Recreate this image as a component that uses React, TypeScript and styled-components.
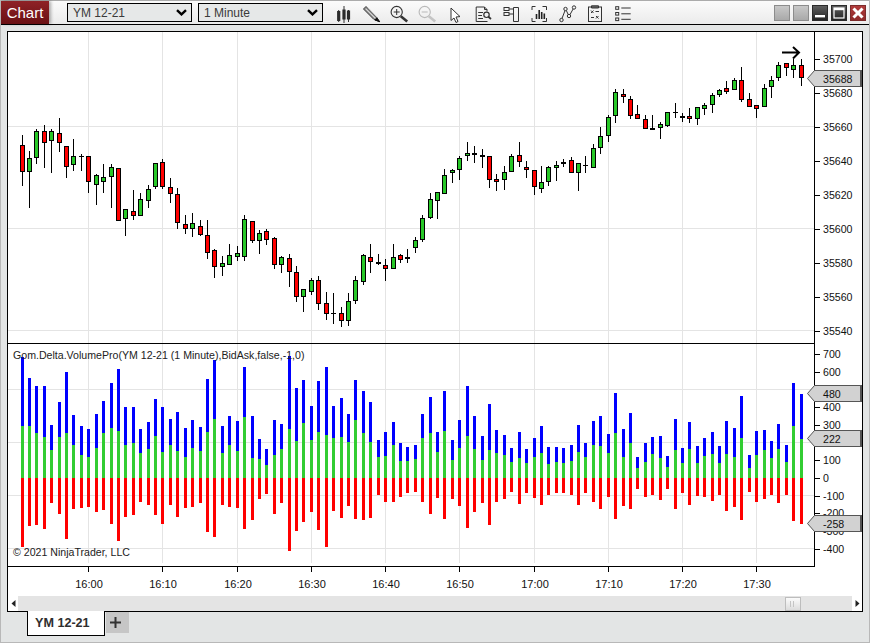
import React from "react";
import styled, { createGlobalStyle } from "styled-components";

const FONT = `"Liberation Sans", Arial, sans-serif`;

const GlobalStyle = createGlobalStyle`
  html, body { margin: 0; padding: 0; background: #e3e5e5; overflow: hidden; }
  * { box-sizing: border-box; }
`;

/* ---------- data: [wick x, high, body top, body bottom, low], page coordinates from thirds-of-a-pixel readings ---------- */
type Kind = "R" | "G" | "D";
type Raw = [number, Kind, number, number, number, number];

const seg1: Raw[] = [
  [67,"R",75,105,187,228],[88,"G",123,145,187,293],[109,"G",57,63,145,161],[133,"R",45,64,100,173],[154,"G",57,64,94,188],
  [178,"R",24,70,100,126],[199,"R",108,109,172,203],[220,"G",87,139,166,182],[244,"D",133,138,140,182],[265,"R",139,139,217,248],
  [289,"G",193,196,226,284],[310,"G",163,202,217,248],[334,"G",163,172,202,293],[355,"R",175,175,334,334],[376,"G",298,298,328,377],
  [400,"R",240,304,319,329],[421,"G",250,268,319,319],[445,"G",226,238,274,293],[466,"G",160,160,232,238],[487,"R",148,157,232,238],
  [511,"R",205,232,253,278],[532,"R",235,253,340,356],[556,"R",316,343,358,371],[577,"G",310,340,358,380],[601,"R",331,349,376,379],
  [622,"R",331,376,430,446],[643,"R",418,421,472,503],[667,"G",439,460,472,497],[688,"G",403,436,466,466],[712,"G",408,430,442,452],
  [733,"G",316,328,442,452],[757,"R",334,334,394,400],[778,"G",361,370,394,431],[799,"R",358,364,391,406],[823,"R",382,385,466,478],
];
const seg2: Raw[] = [
  [4,"G",378,382,406,428],[28,"R",372,385,427,472],[49,"R",408,427,502,515],[70,"G",478,478,502,545],[94,"G",445,451,487,494],
  [115,"R",438,451,523,539],[139,"R",487,520,553,569],[160,"D",490,549,551,581],[184,"R",532,550,574,590],[205,"G",490,514,574,587],
  [226,"G",438,451,514,521],[250,"G",373,376,457,464],[271,"R",343,382,397,428],[295,"D",373,397,402,406],[316,"R",388,406,418,452],
  [340,"G",343,382,418,418],[361,"R",373,376,391,400],[382,"D",358,382,386,400],[406,"G",322,331,355,368],[427,"G",256,265,331,335],
  [451,"G",190,208,265,268],[472,"G",187,187,214,266],[493,"G",118,136,193,193],[517,"G",118,121,130,158],[538,"G",79,85,121,149],
  [562,"G",37,70,79,92],[583,"R",49,70,76,98],[607,"D",58,75,80,113],[628,"R",79,79,151,173],[649,"R",133,148,157,182],
  [673,"G",109,127,151,179],[694,"G",73,79,127,127],[718,"R",37,76,97,112],[739,"R",94,112,121,143],[763,"R",121,121,172,194],
  [784,"G",109,157,178,188],[805,"G",109,112,157,167],[829,"G",94,106,115,152],
];
const seg3: Raw[] = [
  [10,"D",328,336,341,352],[34,"R",322,331,370,370],[55,"G",340,340,370,422],[76,"D",319,345,347,368],[100,"G",283,295,355,355],
  [121,"G",232,259,295,311],[145,"G",196,202,259,275],[166,"G",118,127,199,218],[190,"R",118,133,142,158],[211,"R",139,148,199,208],
  [232,"R",166,193,208,208],[256,"R",196,208,238,238],[277,"D",196,235,239,239],[301,"G",217,223,235,266],[322,"G",187,187,229,232],
  [346,"D",160,186,188,203],[367,"D",190,198,203,215],[388,"R",175,199,208,218],[412,"G",172,172,208,224],[433,"G",160,166,178,194],
  [457,"G",130,136,166,188],[478,"G",118,121,136,142],[499,"R",94,115,127,133],[523,"G",85,91,121,121],[544,"R",52,91,151,157],
  [568,"R",130,148,172,172],[589,"R",166,166,178,203],[613,"G",103,115,172,172],[634,"G",79,91,112,143],[655,"G",37,46,85,92],
  [679,"R",40,40,55,77],[700,"G",28,46,61,83],[724,"R",28,46,85,107],
];

const place = (rows: Raw[], ox: number, oy: number) =>
  rows.map(([x, k, hi, top, bot, lo]) => ({
    x: Math.floor(ox + x / 3),
    kind: k,
    hi: Math.round(oy + hi / 3),
    top: Math.round(oy + top / 3),
    bot: Math.round(oy + bot / 3),
    lo: Math.round(oy + lo / 3),
  }));
const candles = [...place(seg1, 0, 110), ...place(seg2, 280, 130), ...place(seg3, 560, 50)];

/* blue top, green top, red bottom */
const volumes: [number, number, number][] = [
  [52,258,621],[114,258,558],[138,279,555],[138,291,567],[255,330,489],[186,291,522],[96,279,597],[225,315,507],[258,345,504],[267,351,501],
  [222,324,516],[183,279,510],[129,264,552],[87,273,603],[201,315,531],[201,309,525],[267,339,486],[246,327,495],[177,288,525],[201,336,552],
  [237,315,495],[216,333,531],[264,351,504],[240,324,501],[261,333,489],[117,276,576],[60,237,591],[258,339,495],[228,315,501],[243,333,504],
  [81,231,567],[228,354,540],[297,357,477],[327,375,462],[240,345,522],
  [252,327,489],[48,267,633],[144,303,573],[120,249,546],[198,300,516],[123,276,570],[81,285,621],[198,294,513],[174,291,534],[222,306,498],
  [120,240,537],[153,279,540],[186,306,534],[300,351,465],[276,348,486],[246,315,486],[309,363,471],[321,363,459],[315,357,456],[222,294,486],
  [171,279,522],[276,336,474],[153,273,537],[300,360,477],[240,324,498],[138,288,564],[228,327,516],[288,360,489],[192,330,555],[270,339,486],
  [285,345,477],[324,366,456],[276,354,492],[327,369,459],[294,351,474],[258,339,495],[321,372,465],[321,366,459],
  [324,369,459],[315,363,465],[255,336,495],[309,351,459],[243,315,486],[228,318,507],[282,339,471],[159,279,537],[267,351,498],[219,309,507],
  [351,384,447],[309,366,471],[291,342,465],[288,354,480],[348,381,447],[237,330,507],[324,369,459],[246,327,495],[318,369,468],[294,348,471],
  [276,342,483],[318,369,465],[243,342,513],[264,351,501],[168,294,540],[345,384,456],[273,345,486],[270,330,477],[303,354,465],[252,327,489],
  [315,366,465],[129,258,543],[162,297,552],
];

const timeTicks: [number, string][] = [
  [88,"16:00"],[162,"16:10"],[237,"16:20"],[311,"16:30"],[385,"16:40"],[459,"16:50"],[534,"17:00"],[608,"17:10"],[682,"17:20"],[756,"17:30"],
];
const priceTicks = [35700,35680,35660,35640,35620,35600,35580,35560,35540].map((v, i) => ({ v, y: 59 + i * 34 }));
const volumeTicks = [700,600,500,400,300,200,100,0,-100,-200,-300,-400].map((v) => ({ v, y: Math.round(478 - v * 0.177) }));

/* ---------- styled parts ---------- */
const Window = styled.div`
  width: 870px;
  height: 643px;
  display: flex;
  flex-direction: column;
  background: #e3e5e5;
  border-left: 1px solid #b8b8b8;
  border-right: 1px solid #b8b8b8;
  border-bottom: 1px solid #b8b8b8;
  font-family: ${FONT};
`;
const TitleBar = styled.header`
  height: 25px;
  flex: none;
  display: flex;
  align-items: center;
  border-top: 1px solid #ababab;
  border-bottom: 1px solid #000;
  background: linear-gradient(#fbfbfb, #ebebeb);
`;
const ChartTab = styled.div`
  width: 48px;
  height: 23px;
  flex: none;
  display: flex;
  align-items: center;
  justify-content: center;
  color: #fff;
  font-size: 15px;
  background: linear-gradient(#8f2226, #6a1014);
  box-shadow: 2px 0 3px rgba(0, 0, 0, 0.3);
`;
const Selects = styled.div`
  display: flex;
  gap: 6px;
  margin-left: 18px;
`;
const Select = styled.div`
  width: 125px;
  height: 19px;
  display: flex;
  align-items: center;
  justify-content: space-between;
  padding: 0 4px 0 5px;
  border: 1px solid #000;
  background: #e6e8e8;
  font-size: 12px;
  color: #3a3a3a;
`;
const Tools = styled.div`
  display: flex;
  margin-left: 6px;
`;
const ToolSlot = styled.div`
  width: 28px;
  height: 20px;
  display: flex;
  justify-content: center;
`;
const WindowButtons = styled.div`
  margin: 1px 3px 0 auto;
  display: flex;
  gap: 3px;
`;
const WinButton = styled.div<{ $tone: "idle" | "dark" | "close" }>`
  width: 16px;
  height: 16px;
  display: flex;
  align-items: center;
  justify-content: center;
  border: 1px solid ${(p) => (p.$tone === "idle" ? "#8c8c8c" : p.$tone === "close" ? "#7c2a2a" : "#2a2a2a")};
  background: ${(p) =>
    p.$tone === "idle"
      ? "linear-gradient(#c8c8c8, #a9a9a9)"
      : p.$tone === "close"
      ? "linear-gradient(#b03a3a, #8f2a2a)"
      : "linear-gradient(#5e5e5e, #222)"};
`;
const ChartFrame = styled.main`
  width: 856px;
  height: 581px;
  margin: 6px 0 0 6px;
  flex: none;
  display: flex;
  flex-direction: column;
  border: 1px solid #000;
  background: #fff;
`;
const Pane = styled.svg`
  display: block;
  flex: none;
  width: 854px;
`;
const Pixel = styled.g`
  shape-rendering: crispEdges;
`;
const GridLine = styled.line`
  stroke: #e4e4e4;
  stroke-width: 1;
`;
const RuleLine = styled.line`
  stroke: #000;
  stroke-width: 1;
`;
const Wick = styled.rect`
  fill: #000;
`;
const Body = styled.rect<{ $kind: Kind }>`
  fill: ${(p) => (p.$kind === "R" ? "#ff0000" : p.$kind === "G" ? "#28c828" : "#000")};
  stroke: #000;
  stroke-width: ${(p) => (p.$kind === "D" ? 0 : 1)};
`;
const VolumeBar = styled.rect<{ $tone: "ask" | "mid" | "bid" }>`
  fill: ${(p) => (p.$tone === "ask" ? "#0000ff" : p.$tone === "mid" ? "#32cd32" : "#ff0000")};
`;
const AxisText = styled.text`
  font-family: ${FONT};
  font-size: 10.6px;
  fill: #111;
`;
const TimeText = styled(AxisText)`
  font-size: 11px;
  text-anchor: middle;
`;
const PaneNote = styled.text`
  font-family: ${FONT};
  font-size: 10.6px;
  fill: #222;
`;
const FlagShape = styled.path`
  fill: #d2d2d2;
  stroke: #555;
  stroke-width: 1;
`;
const FlagEdge = styled.rect`
  fill: #555;
`;
const ArrowStroke = styled.path`
  fill: none;
  stroke: #000;
  stroke-width: 2;
`;
const ScrollBar = styled.div`
  height: 15px;
  flex: none;
  display: flex;
  background: #e4e4e4;
`;
const ScrollEnd = styled.div`
  width: 10px;
  flex: none;
  display: flex;
  align-items: center;
  justify-content: center;
  background: #fff;
`;
const ScrollTrack = styled.div`
  flex: 1;
  display: flex;
  justify-content: flex-end;
  padding-right: 51px;
`;
const ScrollThumb = styled.div`
  width: 16px;
  margin-top: 1px;
  display: flex;
  gap: 2px;
  padding: 3px 0 3px 4px;
  border: 1px solid #bdbdbd;
  background: linear-gradient(#fbfbfb, #dcdcdc);
`;
const Grip = styled.span`
  width: 1px;
  background: #c4c4c4;
`;
const TabStrip = styled.nav`
  display: flex;
  margin: -1px 0 0 26px;
  position: relative;
`;
const Tab = styled.div`
  width: 78px;
  height: 25px;
  display: flex;
  align-items: center;
  padding-left: 7px;
  background: #fff;
  border: 1px solid #000;
  border-top: none;
  font-size: 12.6px;
  font-weight: 700;
  color: #2e2e2e;
`;
const AddTab = styled.div`
  width: 23px;
  height: 21px;
  margin: 1px 0 0 1px;
  padding-right: 4px;
  display: flex;
  align-items: center;
  justify-content: center;
  background: #c6c6c6;
`;

/* ---------- icons ---------- */
const Chevron = () => (
  <svg width="11" height="7" viewBox="0 0 11 7">
    <path d="M1 1.2 L5.5 5.4 L10 1.2" fill="none" stroke="#000" strokeWidth="2.4" />
  </svg>
);

const Icon: React.FC<{ children: React.ReactNode }> = ({ children }) => (
  <svg width="20" height="20" viewBox="0 0 20 20" fill="none" stroke="#333" strokeWidth="1">
    {children}
  </svg>
);

const icons: React.ReactNode[] = [
  <Icon key="candles">
    <path d="M5.7 7V19M11 3V20M15.5 7V19" />
    <path d="M5.7 8V18M11 6.5V16.5M15.5 7.5V16.5" strokeWidth="3.2" stroke="#2c2c2c" />
  </Icon>,
  <Icon key="pencil">
    <path d="M2.5 6 L5 3.5 L15.5 14 L18.5 18.5 L13 16.5 Z" fill="#9c9c9c" stroke="#333" />
    <path d="M5 6 L15 16M7 4.5 L16 14" stroke="#e4e4e4" strokeWidth="0.8" />
    <path d="M15.5 15 L18.7 18.7 L14 17 Z" fill="#111" stroke="#111" />
  </Icon>,
  <Icon key="zoomin">
    <circle cx="7.7" cy="9" r="5.6" strokeWidth="1.1" />
    <path d="M4.7 9H10.7M7.7 6V12" />
    <path d="M11.8 13.3 L18.2 18.6" strokeWidth="2.6" stroke="#333" />
  </Icon>,
  <Icon key="zoomout">
    <circle cx="7.7" cy="9" r="5.6" strokeWidth="1.1" stroke="#b9b9b9" />
    <path d="M4.7 9H10.7" stroke="#b9b9b9" />
    <path d="M11.8 13.3 L18.2 18.6" strokeWidth="2.6" stroke="#c4c4c4" />
  </Icon>,
  <Icon key="pointer">
    <path d="M6 5 L6 17.5 L9 15 L11 19.5 L13 18.5 L11 14 L15 13.6 Z" fill="#fff" stroke="#333" />
  </Icon>,
  <Icon key="docsearch">
    <path d="M14 8.5V6.5L11.5 4H3.2V18.5H14.5M11.5 4V6.5H14" />
    <path d="M5.2 9.5H10M5.2 12.5H9M5.2 15.5H10" />
    <circle cx="13.5" cy="11.8" r="2.7" strokeWidth="1.2" />
    <path d="M15.4 13.8 L18 16" strokeWidth="1.8" />
  </Icon>,
  <Icon key="panels">
    <rect x="3" y="4.5" width="5" height="3" />
    <rect x="3" y="9.5" width="5" height="3" />
    <path d="M8 6H13M8 11H13" />
    <path d="M12.5 4.5H17.5V18.5H12.5Z" />
  </Icon>,
  <Icon key="bars">
    <path d="M3 7V3.5H6.5M13.5 3.5H17.5V7M3 15V18.5H6.5M13.5 18.5H17.5V15" />
    <path d="M7.5 11V16M10.2 7V16M12.7 9V16M15.3 10.5V16" strokeWidth="1.6" stroke="#222" />
  </Icon>,
  <Icon key="nodes">
    <circle cx="4.5" cy="17" r="1.7" />
    <circle cx="8.5" cy="6" r="1.7" />
    <circle cx="12" cy="13" r="1.7" />
    <circle cx="17" cy="4.5" r="1.7" />
    <path d="M5 15.4 L8 7.6M9.3 7.5 L11.2 11.5M13 11.6 L16.1 6" />
  </Icon>,
  <Icon key="docx">
    <rect x="3.5" y="4" width="13" height="14.5" />
    <path d="M6.5 2.8H13.5V5H6.5Z" fill="#666" />
    <path d="M6 7.5 L8.5 10M8.5 7.5 L6 10M11 13 L13.5 15.5M13.5 13 L11 15.5M10.5 8.5H14M6 14.5H9" />
  </Icon>,
  <Icon key="list">
    <rect x="2.7" y="3.7" width="3" height="2.6" />
    <rect x="2.7" y="9.5" width="3" height="2.6" />
    <rect x="2.7" y="15" width="3" height="2.6" />
    <path d="M8.3 5H17.7M8.3 10.8H17.7M8.3 16.3H17.7" />
  </Icon>,
];

const Flag: React.FC<{ top: number; label: string }> = ({ top, label }) => (
  <g>
    <Pixel as="g">
      <FlagEdge x={860} y={top} width={2} height={17} />
    </Pixel>
    <FlagShape d={`M814.5 ${top + 0.5} L807.5 ${top + 8.5} L814.5 ${top + 16.5} H860.5 V${top + 0.5} Z`} />
    <AxisText x={823} y={top + 12.5}>
      {label}
    </AxisText>
  </g>
);

export default function App() {
  return (
    <>
      <GlobalStyle />
      <Window>
        <TitleBar>
          <ChartTab>Chart</ChartTab>
          <Selects>
            <Select>
              YM 12-21
              <Chevron />
            </Select>
            <Select>
              1 Minute
              <Chevron />
            </Select>
          </Selects>
          <Tools>
            {icons.map((ic, i) => (
              <ToolSlot key={i}>{ic}</ToolSlot>
            ))}
          </Tools>
          <WindowButtons>
            <WinButton $tone="idle" />
            <WinButton $tone="idle" />
            <WinButton $tone="dark">
              <svg width="12" height="12" viewBox="0 0 12 12">
                <rect x="1" y="8" width="10" height="2.4" fill="#fff" />
              </svg>
            </WinButton>
            <WinButton $tone="dark">
              <svg width="12" height="12" viewBox="0 0 12 12">
                <rect x="1" y="1" width="10" height="10" fill="none" stroke="#fff" strokeWidth="1.2" />
                <rect x="1" y="1" width="10" height="2.2" fill="#fff" />
              </svg>
            </WinButton>
            <WinButton $tone="close">
              <svg width="12" height="12" viewBox="0 0 12 12">
                <path d="M1.5 1.5 L10.5 10.5 M10.5 1.5 L1.5 10.5" stroke="#fff" strokeWidth="3" />
              </svg>
            </WinButton>
          </WindowButtons>
        </TitleBar>

        <ChartFrame>
          <Pane height={311} viewBox="8 32 854 311">
            <Pixel>
              {timeTicks.map(([x]) => (
                <GridLine key={x} x1={x + 0.5} x2={x + 0.5} y1={32} y2={343} />
              ))}
              {[126, 228, 330].map((y) => (
                <GridLine key={y} x1={8} x2={814} y1={y + 0.5} y2={y + 0.5} />
              ))}
              {candles.map((c) => (
                <g key={c.x}>
                  <Wick x={c.x} y={c.hi} width={1} height={Math.max(c.lo - c.hi, 1)} />
                  {c.kind === "D" ? (
                    <Body $kind="D" x={c.x - 2} y={c.top} width={5} height={Math.max(c.bot - c.top, 1)} />
                  ) : (
                    <Body $kind={c.kind} x={c.x - 1.5} y={c.top + 0.5} width={4} height={Math.max(c.bot - c.top - 1, 1)} />
                  )}
                </g>
              ))}
              <RuleLine x1={814.5} x2={814.5} y1={32} y2={343} />
              {priceTicks.map((t) => (
                <RuleLine key={t.v} x1={815} x2={820} y1={t.y + 0.5} y2={t.y + 0.5} />
              ))}
            </Pixel>
            {priceTicks.map((t) => (
              <AxisText key={t.v} x={823} y={t.y + 3.8}>
                {t.v}
              </AxisText>
            ))}
            <ArrowStroke d="M782 52.5H799M793 47 L799 52.5 L793 58.5" />
            <Flag top={70} label="35688" />
          </Pane>

          <Pane height={224} viewBox="8 343 854 224">
            <Pixel>
              <RuleLine x1={8} x2={815} y1={343.5} y2={343.5} />
              {timeTicks.map(([x]) => (
                <GridLine key={x} x1={x + 0.5} x2={x + 0.5} y1={344} y2={563} />
              ))}
              {[389, 442, 495, 548].map((y) => (
                <GridLine key={y} x1={8} x2={814} y1={y + 0.5} y2={y + 0.5} />
              ))}
              {volumes.map(([blue, green, red], i) => {
                const x = candles[i].x - 1;
                const b = Math.round(340 + blue / 3);
                const g = Math.round(340 + green / 3);
                const r = Math.round(340 + red / 3);
                return (
                  <g key={i}>
                    <VolumeBar $tone="ask" x={x} y={b} width={3} height={g - b} />
                    <VolumeBar $tone="mid" x={x} y={g} width={3} height={478 - g} />
                    <VolumeBar $tone="bid" x={x} y={478} width={3} height={r - 478} />
                  </g>
                );
              })}
              <RuleLine x1={814.5} x2={814.5} y1={343} y2={567} />
              <RuleLine x1={8} x2={815} y1={566.5} y2={566.5} />
              {volumeTicks.map((t) => (
                <RuleLine key={t.v} x1={815} x2={820} y1={t.y + 0.5} y2={t.y + 0.5} />
              ))}
            </Pixel>
            <PaneNote x={13} y={359}>
              Gom.Delta.VolumePro(YM 12-21 (1 Minute),BidAsk,false,-1,0)
            </PaneNote>
            <PaneNote x={13} y={556}>
              © 2021 NinjaTrader, LLC
            </PaneNote>
            {volumeTicks.map((t) => (
              <AxisText key={t.v} x={823} y={t.y + 3.8}>
                {t.v}
              </AxisText>
            ))}
            <Flag top={385} label="480" />
            <Flag top={430} label="222" />
            <Flag top={515} label="-258" />
          </Pane>

          <Pane height={29} viewBox="8 567 854 29">
            <Pixel>
              {timeTicks.map(([x]) => (
                <RuleLine key={x} x1={x + 0.5} x2={x + 0.5} y1={567} y2={572} />
              ))}
            </Pixel>
            {timeTicks.map(([x, label]) => (
              <TimeText key={x} x={x + 1} y={588}>
                {label}
              </TimeText>
            ))}
          </Pane>

          <ScrollBar>
            <ScrollEnd>
              <svg width="5" height="7" viewBox="0 0 5 7">
                <path d="M4.5 0 L0.5 3.5 L4.5 7 Z" fill="#222" />
              </svg>
            </ScrollEnd>
            <ScrollTrack>
              <ScrollThumb>
                <Grip />
                <Grip />
              </ScrollThumb>
            </ScrollTrack>
            <ScrollEnd>
              <svg width="5" height="7" viewBox="0 0 5 7">
                <path d="M0.5 0 L4.5 3.5 L0.5 7 Z" fill="#222" />
              </svg>
            </ScrollEnd>
          </ScrollBar>
        </ChartFrame>

        <TabStrip>
          <Tab>YM 12-21</Tab>
          <AddTab>
            <svg width="11" height="11" viewBox="0 0 11 11">
              <path d="M0 5.5H11M5.5 0V11" stroke="#333" strokeWidth="2" />
            </svg>
          </AddTab>
        </TabStrip>
      </Window>
    </>
  );
}
